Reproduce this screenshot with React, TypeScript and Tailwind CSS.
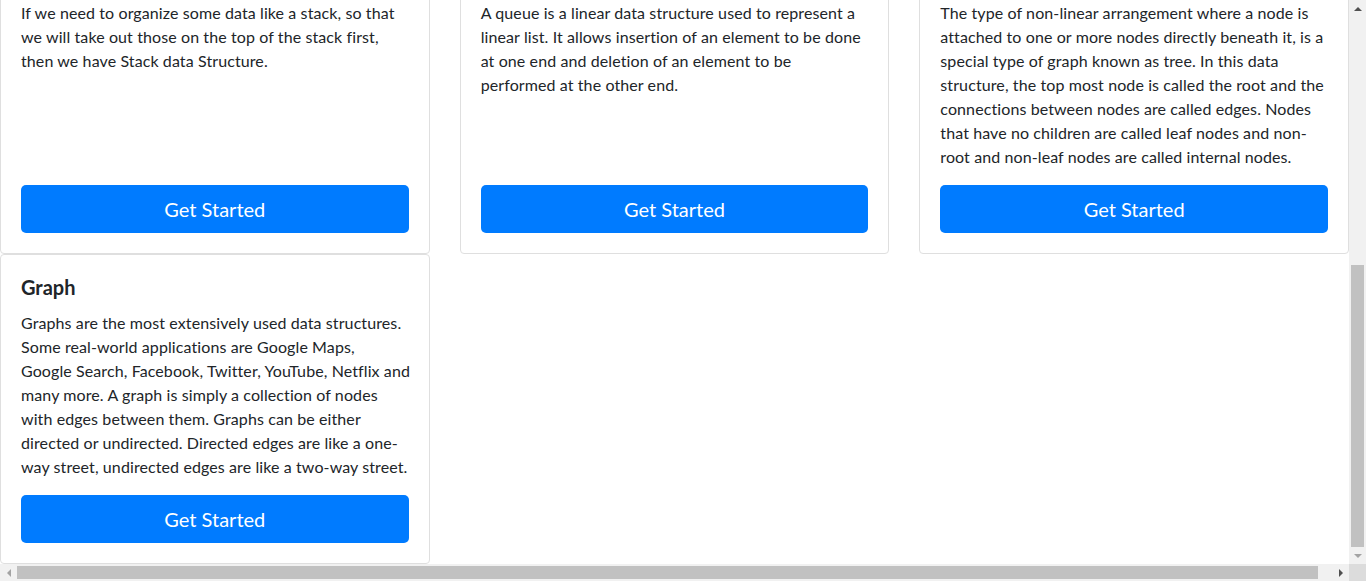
import React from 'react'

type Topic = {
  title: string
  lines: string[]
}

// line breaks follow the original page's wrapping
const topRow: Topic[] = [
  {
    title: 'Stack',
    lines: [
      'If we need to organize some data like a stack, so that',
      'we will take out those on the top of the stack first,',
      'then we have Stack data Structure.',
    ],
  },
  {
    title: 'Queue',
    lines: [
      'A queue is a linear data structure used to represent a',
      'linear list. It allows insertion of an element to be done',
      'at one end and deletion of an element to be',
      'performed at the other end.',
    ],
  },
  {
    title: 'Tree',
    lines: [
      'The type of non-linear arrangement where a node is',
      'attached to one or more nodes directly beneath it, is a',
      'special type of graph known as tree. In this data',
      'structure, the top most node is called the root and the',
      'connections between nodes are called edges. Nodes',
      'that have no children are called leaf nodes and non-',
      'root and non-leaf nodes are called internal nodes.',
    ],
  },
]

const graph: Topic = {
  title: 'Graph',
  lines: [
    'Graphs are the most extensively used data structures.',
    'Some real-world applications are Google Maps,',
    'Google Search, Facebook, Twitter, YouTube, Netflix and',
    'many more. A graph is simply a collection of nodes',
    'with edges between them. Graphs can be either',
    'directed or undirected. Directed edges are like a one-',
    'way street, undirected edges are like a two-way street.',
  ],
}

const TopicCard: React.FC<{ topic: Topic }> = ({ topic }) => (
  <div className="flex flex-col bg-white border border-[#dfdfdf] rounded-[4px] p-5">
    <h5 className="text-[20px] leading-[24px] font-bold text-[#212529] mb-3">{topic.title}</h5>
    <p className="flex-1 mb-4 text-[16px] leading-[24px] tracking-[0.1px] text-[#212529] whitespace-nowrap">
      {topic.lines.map((line, i) => (
        <React.Fragment key={i}>
          {i > 0 && <br />}
          {line}
        </React.Fragment>
      ))}
    </p>
    <button className="h-12 w-full shrink-0 bg-[#007bff] text-white text-[20px] rounded-[5px]">
      Get Started
    </button>
  </div>
)

export default function App() {
  return (
    <div className="h-[581px] w-[1366px] flex flex-col overflow-hidden bg-white font-['Lato','Liberation_Sans',sans-serif]">
      <div className="flex flex-1 min-h-0">
        {/* page content, scrolled to the bottom */}
        <div className="flex-1 flex flex-col justify-end overflow-hidden">
          <div className="grid grid-cols-3 gap-x-[30px] shrink-0">
            {topRow.map((t) => (
              <TopicCard key={t.title} topic={t} />
            ))}
            <TopicCard topic={graph} />
          </div>
        </div>

        {/* vertical scrollbar */}
        <div className="w-[17px] bg-[#f1f1f1] flex flex-col items-center">
          <div className="h-[17px] flex items-center justify-center">
            <span className="w-0 h-0 border-x-[4px] border-x-transparent border-b-[4px] border-b-[#505050]" />
          </div>
          <div className="flex-1 w-full flex flex-col justify-end px-[2px]">
            <div className="h-[282px] bg-[#c1c1c1]" />
          </div>
          <div className="h-[17px] flex items-center justify-center">
            <span className="w-0 h-0 border-x-[4px] border-x-transparent border-t-[4px] border-t-[#a3a3a3]" />
          </div>
        </div>
      </div>

      {/* horizontal scrollbar */}
      <div className="h-[17px] flex bg-[#f1f1f1]">
        <div className="w-[17px] flex items-center justify-center">
          <span className="w-0 h-0 border-y-[4px] border-y-transparent border-r-[4px] border-r-[#a3a3a3]" />
        </div>
        <div className="flex-1 flex items-center py-[2px]">
          <div className="h-full w-[1301px] bg-[#c1c1c1]" />
        </div>
        <div className="w-[17px] flex items-center justify-center">
          <span className="w-0 h-0 border-y-[4px] border-y-transparent border-l-[4px] border-l-[#505050]" />
        </div>
        <div className="w-[17px] bg-[#dcdcdc]" />
      </div>
    </div>
  )
}
